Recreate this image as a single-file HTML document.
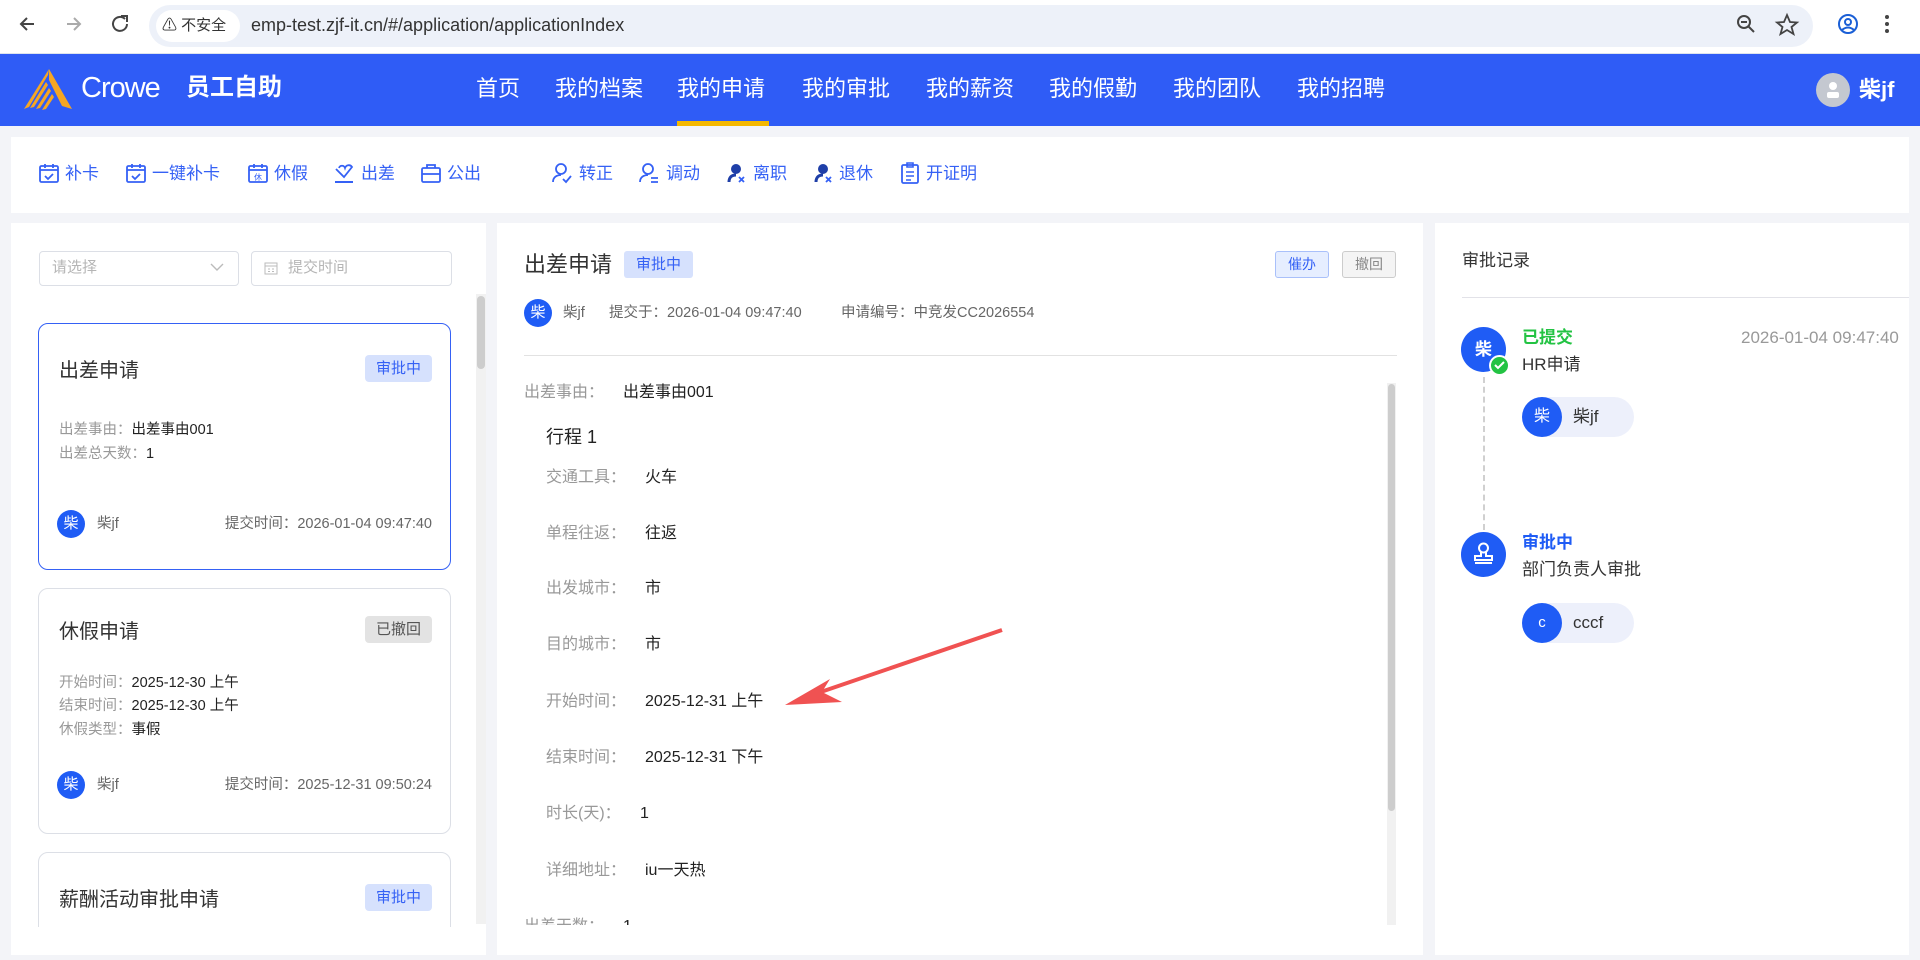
<!DOCTYPE html>
<html><head><meta charset="utf-8">
<style>
*{margin:0;padding:0;box-sizing:border-box}
html,body{width:1920px;height:960px;overflow:hidden}
body{background:#f3f4f8;font-family:"Liberation Sans","Noto Sans CJK SC",sans-serif;color:#333}
#root{position:relative;width:1920px;height:960px;overflow:hidden}
.a{position:absolute;white-space:nowrap}
.panel{position:absolute;background:#fff}
.nav span{position:absolute;top:74px;font-size:22px;color:#fff;line-height:30px}
.tb{position:absolute;top:163px;font-size:17px;color:#3561f5;line-height:22px}
.ic{position:absolute;top:162px;width:22px;height:22px}
.card{position:absolute;left:38px;width:413px;border:1px solid #dcdfe6;border-radius:10px;background:#fff;overflow:hidden}
.ct{position:absolute;left:20px;font-size:20px;color:#333}
.badge{position:absolute;font-size:15px;line-height:27px;padding:0 11px;border-radius:4px}
.bb{background:#d6e1fd;color:#3561f5}
.bg{background:#e3e3e3;color:#555}
.f{position:absolute;left:20px;font-size:14.5px;line-height:20px;color:#999}
.f b{font-weight:normal;color:#222}
.av{position:absolute;border-radius:50%;background:#1f5cf5;color:#fff;text-align:center}
.row{position:absolute;left:546px;font-size:16px;color:#999;line-height:22px}
.row b{position:absolute;left:99px;font-weight:normal;color:#222}
</style></head><body><div id="root">
<div class="a" style="left:0;top:0;width:1920px;height:54px;background:#fff;border-bottom:1px solid #dde3ee"></div>
<svg class="a" style="left:17px;top:13px" width="120" height="22" viewBox="0 0 120 22">
<path d="M17 11H4M10 5L4 11l6 6" stroke="#444" stroke-width="2" fill="none"/>
<path d="M50 11h13M57 5l6 6-6 6" stroke="#aaa" stroke-width="2" fill="none"/>
<path d="M108 6a7 7 0 1 0 2 5" stroke="#444" stroke-width="2" fill="none"/><path d="M104 3h6v6" stroke="#444" stroke-width="2" fill="none"/>
</svg>
<div class="a" style="left:149px;top:5px;width:1664px;height:42px;border-radius:21px;background:#edf1f9"></div>
<div class="a" style="left:156px;top:10px;width:84px;height:32px;border-radius:16px;background:#fff"></div>
<div class="a" style="left:162px;top:14px;font-size:15px;line-height:24px;color:#333">⚠ 不安全</div>
<div class="a" style="left:251px;top:12px;font-size:18px;line-height:26px;color:#333">emp-test.zjf-it.cn/#/application/applicationIndex</div>
<svg class="a" style="left:1735px;top:12px" width="170" height="26" viewBox="0 0 170 26">
<circle cx="9" cy="10" r="6" stroke="#444" stroke-width="2" fill="none"/><path d="M13 14l6 6M6 10h6" stroke="#444" stroke-width="2"/>
<path d="M52 3l3 7 7 .5-5.5 4.5 2 7-6.5-4-6.5 4 2-7L42 10.5l7-.5z" stroke="#444" stroke-width="1.8" fill="none"/>
<circle cx="113" cy="12" r="9" stroke="#1a5fd6" stroke-width="2" fill="none"/><circle cx="113" cy="10" r="3" stroke="#1a5fd6" stroke-width="2" fill="none"/><path d="M107 18q6-5 12 0" stroke="#1a5fd6" stroke-width="2" fill="none"/>
<circle cx="152" cy="5" r="2" fill="#444"/><circle cx="152" cy="12" r="2" fill="#444"/><circle cx="152" cy="19" r="2" fill="#444"/>
</svg>
<div class="a" style="left:0;top:54px;width:1920px;height:72px;background:#2f5cf6"></div>
<svg class="a" style="left:22px;top:66px" width="56" height="46" viewBox="0 0 56 46">
<path d="M27 3L50 43 40 40 27 14z" fill="#f5a623"/>
<path d="M27 3L2 43l5-2L26 9z" fill="#f5a623"/>
<path d="M24 16L8 42l4-1 14-22z M27 22L14 43l4-1 11-17z M30 28L20 44l4-1 8-12z" fill="#f5a623"/>
</svg>
<div class="a" style="left:81px;top:70px;font-size:29px;color:#fff;letter-spacing:-1px;line-height:36px;font-weight:300">Crowe</div>
<div class="a" style="left:186px;top:72px;font-size:24px;color:#fff;font-weight:bold;line-height:32px">员工自助</div>
<div class="nav">
<span style="left:476px">首页</span><span style="left:555px">我的档案</span><span style="left:677px">我的申请</span><span style="left:802px">我的审批</span><span style="left:926px">我的薪资</span><span style="left:1049px">我的假勤</span><span style="left:1173px">我的团队</span><span style="left:1297px">我的招聘</span>
</div>
<div class="a" style="left:677px;top:121px;width:92px;height:5px;background:#f5b800"></div>
<div class="a" style="left:1816px;top:73px;width:34px;height:34px;border-radius:50%;background:#c4c8d0"></div>
<svg class="a" style="left:1824px;top:80px" width="18" height="20" viewBox="0 0 18 20"><circle cx="9" cy="6" r="4" fill="#fff"/><rect x="3" y="12" width="12" height="6" rx="2" fill="#fff"/></svg>
<div class="a" style="left:1859px;top:75px;font-size:22px;color:#fff;font-weight:bold;line-height:30px">柴jf</div>
<div class="panel" style="left:11px;top:137px;width:1898px;height:76px"></div>
<svg class="ic" style="left:38px" viewBox="0 0 22 22"><rect x="2" y="4" width="18" height="16" rx="1.5" stroke="#3561f5" stroke-width="1.8" fill="none"/><path d="M2 8h18M7 2v4M15 2v4M7 14l3 3 5-5" stroke="#3561f5" stroke-width="1.8" fill="none"/></svg>
<div class="tb" style="left:65px">补卡</div>
<svg class="ic" style="left:125px" viewBox="0 0 22 22"><rect x="2" y="4" width="18" height="16" rx="1.5" stroke="#3561f5" stroke-width="1.8" fill="none"/><path d="M2 8h18M7 2v4M15 2v4M7 14l3 3 5-5" stroke="#3561f5" stroke-width="1.8" fill="none"/></svg>
<div class="tb" style="left:152px">一键补卡</div>
<svg class="ic" style="left:247px" viewBox="0 0 22 22"><rect x="2" y="4" width="18" height="16" rx="1.5" stroke="#3561f5" stroke-width="1.8" fill="none"/><path d="M2 8h18M7 2v4M15 2v4" stroke="#3561f5" stroke-width="1.8"/><text x="11" y="18" font-size="8" fill="#3561f5" text-anchor="middle">休</text></svg>
<div class="tb" style="left:274px">休假</div>
<svg class="ic" style="left:333px" viewBox="0 0 22 22"><path d="M3 7l8 8 8-10c-2-3-6-2-7 1-1-3-5-3-6 0" stroke="#3561f5" stroke-width="1.8" fill="none"/><path d="M2 20h18" stroke="#3561f5" stroke-width="2"/></svg>
<div class="tb" style="left:361px">出差</div>
<svg class="ic" style="left:420px" viewBox="0 0 22 22"><rect x="2" y="6" width="18" height="14" rx="1.5" stroke="#3561f5" stroke-width="1.8" fill="none"/><path d="M7 6V3h8v3M2 12h18" stroke="#3561f5" stroke-width="1.8" fill="none"/></svg>
<div class="tb" style="left:447px">公出</div>
<svg class="ic" style="left:551px" viewBox="0 0 22 22"><circle cx="10" cy="7" r="5" stroke="#3561f5" stroke-width="1.8" fill="none"/><path d="M2 20c0-5 4-7 8-7M12 17l3 3 5-6" stroke="#3561f5" stroke-width="1.8" fill="none"/></svg>
<div class="tb" style="left:579px">转正</div>
<svg class="ic" style="left:638px" viewBox="0 0 22 22"><circle cx="10" cy="7" r="5" stroke="#3561f5" stroke-width="1.8" fill="none"/><path d="M2 20c0-5 4-7 8-7M13 16h7M13 20h7" stroke="#3561f5" stroke-width="1.8" fill="none"/></svg>
<div class="tb" style="left:666px">调动</div>
<svg class="ic" style="left:726px" viewBox="0 0 22 22"><circle cx="10" cy="7" r="5" fill="#1f3fa8"/><path d="M3 20c0-5 3-7 7-7" stroke="#1f3fa8" stroke-width="3" fill="none"/><path d="M13 15l5 5M18 15l-5 5" stroke="#3561f5" stroke-width="1.8"/></svg>
<div class="tb" style="left:753px">离职</div>
<svg class="ic" style="left:813px" viewBox="0 0 22 22"><circle cx="10" cy="7" r="5" fill="#1f3fa8"/><path d="M3 20c0-5 3-7 7-7" stroke="#1f3fa8" stroke-width="3" fill="none"/><path d="M13 15l5 5M18 15l-5 5" stroke="#3561f5" stroke-width="1.8"/></svg>
<div class="tb" style="left:839px">退休</div>
<svg class="ic" style="left:899px" viewBox="0 0 22 22"><rect x="3" y="3" width="16" height="18" rx="1.5" stroke="#3561f5" stroke-width="1.8" fill="none"/><path d="M8 1h6v4H8zM7 10h8M7 14h8M7 18h5" stroke="#3561f5" stroke-width="1.6" fill="none"/></svg>
<div class="tb" style="left:926px">开证明</div>
<div class="panel" style="left:11px;top:223px;width:475px;height:732px"></div>
<div class="a" style="left:39px;top:251px;width:200px;height:35px;border:1px solid #dcdfe6;border-radius:4px"></div>
<div class="a" style="left:52px;top:257px;font-size:15px;line-height:22px;color:#b5b5b5">请选择</div>
<svg class="a" style="left:210px;top:262px" width="14" height="10"><path d="M1 2l6 6 6-6" stroke="#bbb" stroke-width="1.4" fill="none"/></svg>
<div class="a" style="left:251px;top:251px;width:201px;height:35px;border:1px solid #dcdfe6;border-radius:4px"></div>
<svg class="a" style="left:264px;top:261px" width="14" height="14"><rect x="1" y="2" width="12" height="11" stroke="#bbb" fill="none"/><path d="M1 5h12M4 8h2M8 8h2M4 10.5h2M8 10.5h2" stroke="#bbb"/></svg>
<div class="a" style="left:288px;top:257px;font-size:15px;line-height:22px;color:#b5b5b5">提交时间</div>
<div class="a" style="left:476px;top:294px;width:10px;height:630px;background:#f1f1f1"></div>
<div class="a" style="left:477px;top:296px;width:8px;height:73px;border-radius:4px;background:#cdcdcd"></div>
<div class="a" style="left:11px;top:224px;width:465px;height:703px;overflow:hidden">
 <div class="card" style="top:99px;left:27px;height:247px;border-color:#3561f5">
  <div class="ct" style="top:30px">出差申请</div>
  <div class="badge bb" style="right:18px;top:31px">审批中</div>
  <div class="f" style="top:96px">出差事由：<b>出差事由001</b></div>
  <div class="f" style="top:120px">出差总天数：<b>1</b></div>
  <div class="av" style="left:18px;top:186px;width:28px;height:28px;font-size:15px;line-height:28px">柴</div>
  <div class="f" style="left:58px;top:190px;color:#666">柴jf</div>
  <div class="f" style="left:auto;right:18px;top:190px;color:#666">提交时间：2026-01-04 09:47:40</div>
 </div>
 <div class="card" style="top:364px;left:27px;height:246px">
  <div class="ct" style="top:26px">休假申请</div>
  <div class="badge bg" style="right:18px;top:27px">已撤回</div>
  <div class="f" style="top:84px">开始时间：<b>2025-12-30 上午</b></div>
  <div class="f" style="top:107px">结束时间：<b>2025-12-30 上午</b></div>
  <div class="f" style="top:131px">休假类型：<b>事假</b></div>
  <div class="av" style="left:18px;top:182px;width:28px;height:28px;font-size:15px;line-height:28px">柴</div>
  <div class="f" style="left:58px;top:186px;color:#666">柴jf</div>
  <div class="f" style="left:auto;right:18px;top:186px;color:#666">提交时间：2025-12-31 09:50:24</div>
 </div>
 <div class="card" style="top:628px;left:27px;height:200px">
  <div class="ct" style="top:30px">薪酬活动审批申请</div>
  <div class="badge bb" style="right:18px;top:31px">审批中</div>
 </div>
</div>
<div class="panel" style="left:497px;top:223px;width:926px;height:732px"></div>
<div class="a" style="left:524px;top:250px;font-size:22px;line-height:30px;color:#333">出差申请</div>
<div class="a" style="left:624px;top:251px;width:69px;height:27px;border-radius:3px;background:#d6e1fd;color:#3561f5;font-size:15px;line-height:27px;text-align:center">审批中</div>
<div class="a" style="left:1275px;top:251px;width:54px;height:27px;border-radius:3px;background:#e6eeff;border:1px solid #a9c0fa;color:#3561f5;font-size:14px;line-height:25px;text-align:center">催办</div>
<div class="a" style="left:1342px;top:251px;width:54px;height:27px;border-radius:3px;background:#f4f4f4;border:1px solid #ccc;color:#888;font-size:14px;line-height:25px;text-align:center">撤回</div>
<div class="av" style="left:524px;top:299px;width:28px;height:28px;font-size:15px;line-height:28px">柴</div>
<div class="a" style="left:563px;top:303px;font-size:14.5px;line-height:20px;color:#666">柴jf</div>
<div class="a" style="left:609px;top:303px;font-size:14.5px;line-height:20px;color:#666">提交于：2026-01-04 09:47:40</div>
<div class="a" style="left:841px;top:303px;font-size:14.5px;line-height:20px;color:#666">申请编号：中竞发CC2026554</div>
<div class="a" style="left:524px;top:355px;width:873px;height:1px;background:#e2e2e2"></div>
<div class="a" style="left:1387px;top:383px;width:9px;height:542px;background:#f1f1f1"></div>
<div class="a" style="left:1388px;top:384px;width:7px;height:427px;border-radius:4px;background:#cdcdcd"></div>
<div class="a" style="left:497px;top:370px;width:885px;height:555px;overflow:hidden">
 <div class="row" style="left:27px;top:12px">出差事由：<b>出差事由001</b></div>
 <div class="a" style="left:49px;top:55px;font-size:18px;line-height:24px;color:#222">行程 1</div>
 <div class="row" style="left:49px;top:97px">交通工具：<b>火车</b></div>
 <div class="row" style="left:49px;top:153px">单程往返：<b>往返</b></div>
 <div class="row" style="left:49px;top:208px">出发城市：<b>市</b></div>
 <div class="row" style="left:49px;top:264px">目的城市：<b>市</b></div>
 <div class="row" style="left:49px;top:321px">开始时间：<b>2025-12-31 上午</b></div>
 <div class="row" style="left:49px;top:377px">结束时间：<b>2025-12-31 下午</b></div>
 <div class="row" style="left:49px;top:433px">时长(天)：<b style="left:94px">1</b></div>
 <div class="row" style="left:49px;top:490px">详细地址：<b>iu一天热</b></div>
 <div class="row" style="left:27px;top:546px">出差天数：<b>1</b></div>
</div>
<svg class="a" style="left:780px;top:625px" width="230" height="90" viewBox="0 0 230 90">
<path d="M222 5L32 70" stroke="#f05252" stroke-width="4"/>
<path d="M5 80L50 54 42 67 62 77z" fill="#f05252"/>
</svg>
<div class="panel" style="left:1435px;top:223px;width:474px;height:732px"></div>
<div class="a" style="left:1462px;top:249px;font-size:17px;line-height:24px;color:#333">审批记录</div>
<div class="a" style="left:1462px;top:297px;width:447px;height:1px;background:#e2e2e8"></div>
<div class="a" style="left:1483px;top:377px;height:153px;border-left:2px dashed #d0d0d0"></div>
<div class="av" style="left:1461px;top:327px;width:45px;height:45px;font-size:17px;line-height:45px;font-weight:bold">柴</div>
<div class="a" style="left:1489px;top:355px;width:21px;height:21px;border-radius:50%;background:#23c343;border:2px solid #fff"></div>
<svg class="a" style="left:1493px;top:360px" width="13" height="11"><path d="M2 5l3 3 6-6" stroke="#fff" stroke-width="2" fill="none"/></svg>
<div class="a" style="left:1522px;top:326px;font-size:17px;line-height:24px;color:#23c343;font-weight:bold">已提交</div>
<div class="a" style="left:1741px;top:326px;font-size:17px;line-height:24px;color:#999">2026-01-04 09:47:40</div>
<div class="a" style="left:1522px;top:353px;font-size:17px;line-height:24px;color:#333">HR申请</div>
<div class="a" style="left:1522px;top:397px;width:112px;height:40px;border-radius:20px;background:#edf0fb"></div>
<div class="av" style="left:1522px;top:397px;width:40px;height:40px;font-size:16px;line-height:40px">柴</div>
<div class="a" style="left:1573px;top:405px;font-size:17px;line-height:24px;color:#333">柴jf</div>
<div class="av" style="left:1461px;top:532px;width:45px;height:45px"></div>
<svg class="a" style="left:1470px;top:541px" width="27" height="27" viewBox="0 0 27 27"><circle cx="13.5" cy="7" r="4.5" stroke="#fff" stroke-width="2" fill="none"/><path d="M11 11v4H5v4h17v-4h-6v-4" stroke="#fff" stroke-width="2" fill="none"/><path d="M5 22h17" stroke="#fff" stroke-width="2"/></svg>
<div class="a" style="left:1522px;top:531px;font-size:17px;line-height:24px;color:#1f5cf5;font-weight:bold">审批中</div>
<div class="a" style="left:1522px;top:558px;font-size:17px;line-height:24px;color:#333">部门负责人审批</div>
<div class="a" style="left:1522px;top:603px;width:112px;height:40px;border-radius:20px;background:#edf0fb"></div>
<div class="av" style="left:1522px;top:603px;width:40px;height:40px;font-size:15px;line-height:40px">c</div>
<div class="a" style="left:1573px;top:611px;font-size:17px;line-height:24px;color:#333">cccf</div>
</div></body></html>
